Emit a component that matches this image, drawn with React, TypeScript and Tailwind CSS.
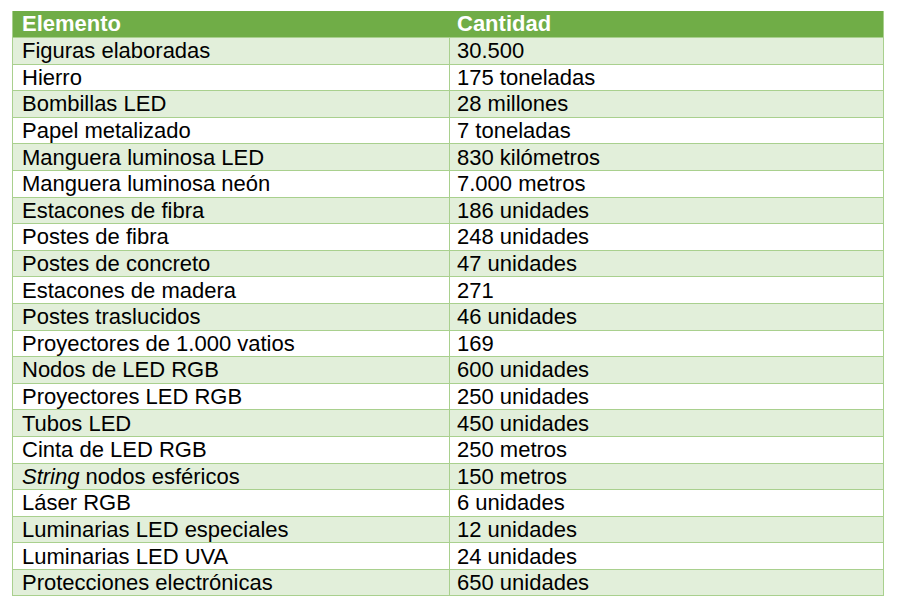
import React from 'react';

const rows: [React.ReactNode, string][] = [
  ['Figuras elaboradas', '30.500'],
  ['Hierro', '175 toneladas'],
  ['Bombillas LED', '28 millones'],
  ['Papel metalizado', '7 toneladas'],
  ['Manguera luminosa LED', '830 kilómetros'],
  ['Manguera luminosa neón', '7.000 metros'],
  ['Estacones de fibra', '186 unidades'],
  ['Postes de fibra', '248 unidades'],
  ['Postes de concreto', '47 unidades'],
  ['Estacones de madera', '271'],
  ['Postes traslucidos', '46 unidades'],
  ['Proyectores de 1.000 vatios', '169'],
  ['Nodos de LED RGB', '600 unidades'],
  ['Proyectores LED RGB', '250 unidades'],
  ['Tubos LED', '450 unidades'],
  ['Cinta de LED RGB', '250 metros'],
  [<span><i>String</i> nodos esféricos</span>, '150 metros'],
  ['Láser RGB', '6 unidades'],
  ['Luminarias LED especiales', '12 unidades'],
  ['Luminarias LED UVA', '24 unidades'],
  ['Protecciones electrónicas', '650 unidades'],
];

export default function App() {
  return (
    <div className="w-[900px] h-[612px] bg-white pt-[11px] pl-[12px] font-['Liberation_Sans',Arial,sans-serif] text-[22px] leading-none text-black">
      <div className="w-[872px] border-x border-b border-[#a9d08e]">
        {/* Header */}
        <div className="grid grid-cols-[437px_1fr] h-[26px] bg-[#70ad47] text-white font-bold">
          <div className="flex items-center pl-[9px]">Elemento</div>
          <div className="flex items-center pl-[7px]">Cantidad</div>
        </div>

        {rows.map(([name, qty], i) => (
          <div
            key={i}
            className={`grid grid-cols-[437px_1fr] h-[26.6px] border-t border-[#a9d08e] ${
              i % 2 === 0 ? 'bg-[#e2efda]' : 'bg-white'
            }`}
          >
            <div className="flex items-center pl-[9px] pt-px border-r border-[#a9d08e]">{name}</div>
            <div className="flex items-center pl-[7px] pt-px">{qty}</div>
          </div>
        ))}
      </div>
    </div>
  );
}
